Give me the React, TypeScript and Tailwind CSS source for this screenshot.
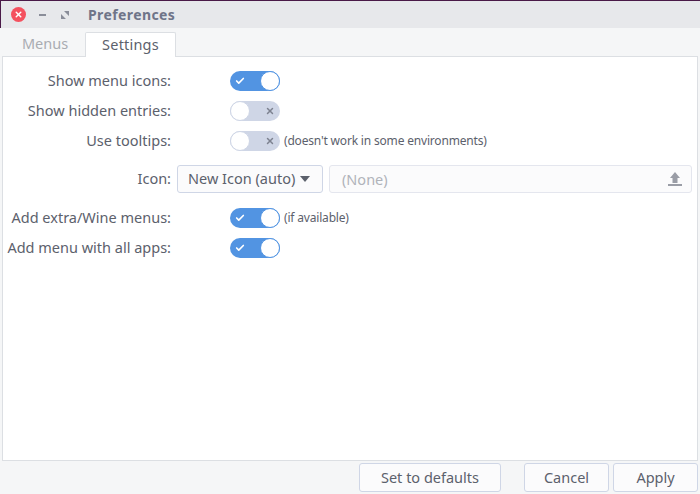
import React from 'react';
import { Check, X } from 'lucide-react';

const font = { fontFamily: '"Noto Sans", sans-serif' };

function Toggle({ on }: { on: boolean }) {
  if (on) {
    return (
      <div className="w-[50px] h-[20px] rounded-full bg-[#5294e2] flex items-center justify-between shrink-0">
        <Check size={10} strokeWidth={4} className="text-white ml-[5px]" />
        <div className="w-[20px] h-[20px] rounded-full bg-white border border-[#5294e2]" />
      </div>
    );
  }
  return (
    <div className="w-[50px] h-[20px] rounded-full bg-[#cfd6e6] flex items-center justify-between shrink-0">
      <div className="w-[20px] h-[20px] rounded-full bg-white border border-[#cfd6e6]" />
      <X size={10} strokeWidth={3.5} className="text-[#7d8290] mr-[5px]" />
    </div>
  );
}

function Row({ label, h, children }: { label: string; h: string; children: React.ReactNode }) {
  return (
    <div className={`flex items-center ${h}`}>
      <div className="w-[168px] text-right text-[14.5px] text-[#5c616c] whitespace-nowrap shrink-0">{label}</div>
      {children}
    </div>
  );
}

function Note({ children }: { children: React.ReactNode }) {
  return <span className="ml-[4px] text-[12px] tracking-[-0.18px] text-[#5c616c] whitespace-nowrap">{children}</span>;
}

function FooterButton({ label, w }: { label: string; w: string }) {
  return (
    <button className={`${w} h-[29px] rounded-[3px] border border-[#cfd6e6] bg-[#fbfbfc] text-[14.5px] text-[#5c616c]`}>
      {label}
    </button>
  );
}

export default function App() {
  return (
    <div style={font} className="w-[700px] h-[494px] flex flex-col bg-[#f5f6f7] overflow-hidden">
      {/* title bar */}
      <div className="h-[28px] shrink-0 flex items-center bg-[#e7e8eb] border-t border-l border-[#4a1a48]">
        <div className="ml-[10px] w-[15px] h-[15px] rounded-full bg-[#f4515f] flex items-center justify-center">
          <X size={9} strokeWidth={4} className="text-white" />
        </div>
        <div className="ml-[13px] w-[7px] h-[2px] bg-[#8a8d99]" />
        <svg width="8" height="8" viewBox="0 0 8 8" className="ml-[15px]">
          <path d="M3 0h5v5z M0 3v5h5z" fill="#8a8d99" />
        </svg>
        <span className="ml-[19px] text-[14px] font-bold tracking-[0.4px] text-[#6f7488]">Preferences</span>
      </div>

      {/* tabs */}
      <div className="h-[29px] shrink-0 flex items-end pl-[2px] relative z-10">
        <div className="w-[83px] h-[25px] pb-[1px] pl-[3px] flex items-center justify-center text-[14.5px] text-[#a9acb2]">Menus</div>
        <div className="w-[91px] h-[25px] pb-[1px] flex items-center justify-center bg-white border border-b-0 border-[#dcdfe3] rounded-t-[2px] text-[14.5px] tracking-[0.2px] text-[#5c616c]">Settings</div>
      </div>

      {/* settings */}
      <div className="flex-1 mx-[2px] -mt-px bg-white border border-[#dcdfe3] pt-[9px]">
        <Row label="Show menu icons:" h="h-[30px]">
          <div className="ml-[59px]"><Toggle on /></div>
        </Row>
        <Row label="Show hidden entries:" h="h-[30px]">
          <div className="ml-[59px]"><Toggle on={false} /></div>
        </Row>
        <Row label="Use tooltips:" h="h-[30px]">
          <div className="ml-[59px]"><Toggle on={false} /></div>
          <Note>(doesn't work in some environments)</Note>
        </Row>
        <Row label="Icon:" h="h-[46px]">
          <div className="ml-[6px] w-[146px] h-[28px] rounded-[3px] border border-[#cfd6e6] bg-[#fbfbfc] flex items-center pl-[10px] text-[14.5px] text-[#5c616c] shrink-0">
            New Icon (auto)
            <span className="ml-[5px] w-0 h-0 border-x-[5.5px] border-x-transparent border-t-[6px] border-t-[#5c616c]" />
          </div>
          <div className="ml-[6px] w-[363px] h-[28px] rounded-[3px] border border-[#e4e6ee] bg-[#fbfbfc] flex items-center justify-between pl-[12px] pr-[9px] text-[14.5px] text-[#b0b3ba]">
            <span className="mt-[1px]">(None)</span>
            <svg width="14" height="14" viewBox="0 0 14 14">
              <path d="M7 0l5 6H9.500v5h-5V6H2z M0 12h14v2H0z" fill="#9a9da6" />
            </svg>
          </div>
        </Row>
        <Row label="Add extra/Wine menus:" h="h-[32px]">
          <div className="ml-[59px]"><Toggle on /></div>
          <Note>(if available)</Note>
        </Row>
        <Row label="Add menu with all apps:" h="h-[28px]">
          <div className="ml-[59px]"><Toggle on /></div>
        </Row>
      </div>

      {/* footer */}
      <div className="h-[33px] shrink-0 flex items-center justify-end gap-[4px] pr-[2px]">
        <div className="mr-[19px]"><FooterButton label="Set to defaults" w="w-[142px]" /></div>
        <FooterButton label="Cancel" w="w-[85px]" />
        <FooterButton label="Apply" w="w-[85px]" />
      </div>
    </div>
  );
}
